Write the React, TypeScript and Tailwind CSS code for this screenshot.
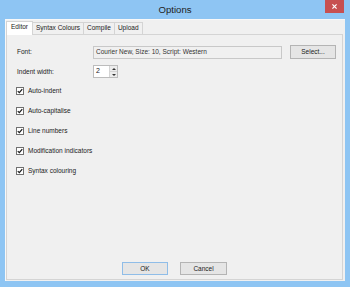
import { useState } from "react";

const CheckMark = () => (
  <svg className="w-[6px] h-[6px]" viewBox="0 0 8 8" fill="none" stroke="#1a1a1a" strokeWidth={1.6}>
    <path d="M1 4.2 L3.1 6.3 L7 1.5" />
  </svg>
);

const options = ["Auto-indent", "Auto-capitalise", "Line numbers", "Modification indicators", "Syntax colouring"];
const tabs = ["Editor", "Syntax Colours", "Compile", "Upload"];

export default function App() {
  const [checked, setChecked] = useState<Record<string, boolean>>(
    Object.fromEntries(options.map((o) => [o, true]))
  );
  const [tab, setTab] = useState("Editor");

  return (
    <div
      className="w-[350px] h-[287px] bg-[#8ec5f3] flex flex-col text-[#1a1a1a] overflow-hidden"
      style={{ fontFamily: '"Liberation Sans", Arial, sans-serif' }}
    >
      {/* Title bar */}
      <div className="relative h-[19px] flex items-center justify-center">
        <span className="text-[9.6px] text-[#222] pt-[1px]">Options</span>
        <button className="absolute right-[6px] top-0 w-[19px] h-[13px] bg-[#c75050] flex items-center justify-center">
          <svg className="w-[5px] h-[5px]" viewBox="0 0 6 6" stroke="#fff" strokeWidth={1.4}>
            <path d="M0.5 0.5 L5.5 5.5 M5.5 0.5 L0.5 5.5" />
          </svg>
        </button>
      </div>

      {/* Client area */}
      <div className="mx-[5px] h-[262px] bg-[#f0f0f0] border-l border-t border-[#f8f8f8] flex flex-col pr-[1px] pb-[1px]">
        {/* Tab strip */}
        <div className="flex items-end h-[14px]">
          {tabs.map((t) => {
            const sel = t === tab;
            return (
              <button
                key={t}
                onClick={() => setTab(t)}
                className={
                  sel
                    ? "h-[14px] px-[4px] bg-white border border-b-0 border-[#d4d4d4] text-[6.5px] leading-none relative z-10 -mb-[1px] pb-[2px]"
                    : "h-[12px] px-[3px] bg-[#f0f0f0] border border-l-0 border-b-0 border-[#d4d4d4] text-[6.5px] leading-none"
                }
              >
                {t}
              </button>
            );
          })}
        </div>

        {/* Tab page */}
        <div className="flex-1 mr-[1px] border border-[#d4d4d4] bg-[#f0f0f0] flex flex-col pt-[10px] pl-[10px] pr-[6px] pb-[4px] text-[6.5px]">
          <div className="flex items-center h-[14px]">
            <span className="w-[76px]">Font:</span>
            <div className="w-[189px] h-[13px] border border-[#c8c8c8] bg-[#f0f0f0] flex items-center px-[2px] text-[#333]">
              Courier New, Size: 10, Script: Western
            </div>
            <button className="ml-[8px] w-[46px] h-[14px] bg-[#e5e5e5] border border-[#b4b4b4] flex items-center justify-center">
              Select...
            </button>
          </div>

          <div className="flex items-center h-[13px] mt-[6px]">
            <span className="w-[76px]">Indent width:</span>
            <div className="w-[25px] h-[13px] border border-[#bcbcbc] bg-white flex">
              <span className="flex-1 px-[2px] flex items-center text-[7px]">2</span>
              <div className="w-[8px] flex flex-col border-l border-[#d4d4d4] bg-[#ececec]">
                <div className="flex-1 flex items-center justify-center border-b border-[#d4d4d4]">
                  <svg className="w-[4px] h-[2px]" viewBox="0 0 4 2"><path d="M0 2 L2 0 L4 2 Z" fill="#333" /></svg>
                </div>
                <div className="flex-1 flex items-center justify-center">
                  <svg className="w-[4px] h-[2px]" viewBox="0 0 4 2"><path d="M0 0 L2 2 L4 0 Z" fill="#333" /></svg>
                </div>
              </div>
            </div>
          </div>

          <div className="flex flex-col gap-[12px] mt-[9px]">
            {options.map((o) => (
              <label key={o} className="flex items-center h-[8px] cursor-pointer">
                <span
                  onClick={() => setChecked({ ...checked, [o]: !checked[o] })}
                  className="w-[8px] h-[8px] ml-[-1px] border border-[#707070] bg-white flex items-center justify-center"
                >
                  {checked[o] && <CheckMark />}
                </span>
                <span className="ml-[4px]">{o}</span>
              </label>
            ))}
          </div>

          <div className="mt-auto flex justify-center gap-[12px] pr-[4px]">
            <button className="w-[46px] h-[13px] bg-[#e5e5e5] border border-[#8fbde8] flex items-center justify-center">
              OK
            </button>
            <button className="w-[47px] h-[13px] bg-[#e5e5e5] border border-[#b4b4b4] flex items-center justify-center">
              Cancel
            </button>
          </div>
        </div>
      </div>
    </div>
  );
}
